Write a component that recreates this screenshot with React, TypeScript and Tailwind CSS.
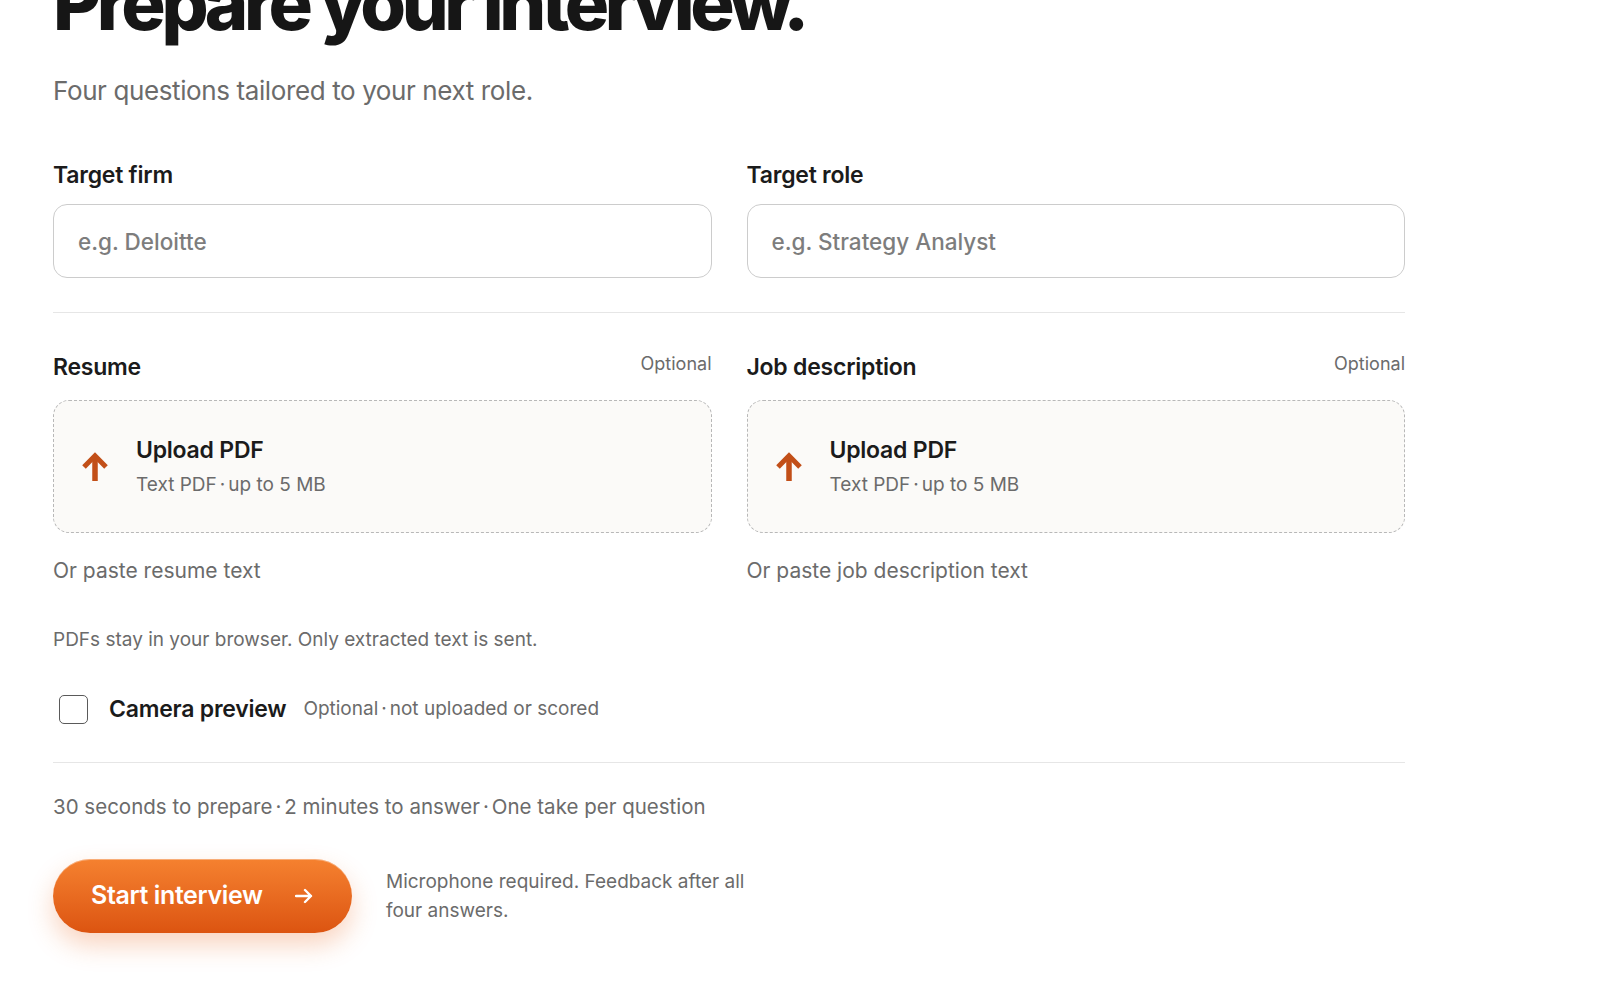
import React from "react";

function UploadArrow() {
  return (
    <svg width="28" height="29" viewBox="0 0 28 29" className="shrink-0">
      <rect x="11.25" y="6" width="5.5" height="23" fill="#c24f18" />
      <polyline points="3,15 14,3.8 25,15" fill="none" stroke="#c24f18" strokeWidth="5" strokeLinejoin="miter" strokeLinecap="butt" />
    </svg>
  );
}

function Dot() {
  return <span className="mx-[3px]">·</span>;
}

function Field({ label, placeholder }: { label: string; placeholder: string }) {
  return (
    <div className="flex flex-col">
      <label className="text-[23px] leading-[28px] font-semibold text-[#1b1b1b] tracking-[-0.01em]">{label}</label>
      <input
        placeholder={placeholder}
        className="mt-[15px] h-[74px] w-full rounded-[14px] border border-[#cccccc] bg-white px-[24px] text-[22.5px] font-medium text-[#1b1b1b] outline-none placeholder:text-[#7d7d7d]"
      />
    </div>
  );
}

function Upload({ label, paste }: { label: string; paste: string }) {
  return (
    <div className="flex flex-col">
      <div className="flex items-start justify-between">
        <span className="text-[23px] leading-[28px] font-semibold text-[#1b1b1b] tracking-[-0.01em]">{label}</span>
        <span className="text-[18px] leading-[22px] text-[#6b6b6b]">Optional</span>
      </div>
      <div className="mt-[19px] h-[133px] rounded-[16px] border border-dashed border-[#b8b8b8] bg-[#fbfaf8] flex items-center pl-[27px]">
        <UploadArrow />
        <div className="ml-[27px] flex flex-col">
          <span className="text-[23px] leading-[30px] font-semibold text-[#1b1b1b] tracking-[-0.01em]">Upload PDF</span>
          <span className="mt-[7px] text-[19px] leading-[26px] text-[#6b6b6b]">
            Text PDF<Dot />up to 5 MB
          </span>
        </div>
      </div>
      <p className="mt-[24px] text-[21px] leading-[28px] text-[#6b6b6b]">{paste}</p>
    </div>
  );
}

export default function App() {
  return (
    <div className="min-h-screen bg-white font-['Inter',sans-serif] overflow-hidden">
      <div className="ml-[53px] w-[1352px]">
        <h1 className="-mt-[34px] text-[74px] leading-none font-extrabold tracking-[-0.06em] text-[#161616]">
          Prepare your interview.
        </h1>
        <p className="mt-[35px] text-[26px] leading-[32px] text-[#6b6b6b] tracking-[-0.015em]">
          Four questions tailored to your next role.
        </p>

        <div className="mt-[54px] grid grid-cols-2 gap-x-[35px]">
          <Field label="Target firm" placeholder="e.g. Deloitte" />
          <Field label="Target role" placeholder="e.g. Strategy Analyst" />
        </div>

        <div className="mt-[34px] border-t border-[#e6e6e6]" />

        <div className="mt-[40px] grid grid-cols-2 gap-x-[35px]">
          <Upload label="Resume" paste="Or paste resume text" />
          <Upload label="Job description" paste="Or paste job description text" />
        </div>

        <p className="mt-[42px] text-[19px] leading-[26px] text-[#6b6b6b]">
          PDFs stay in your browser. Only extracted text is sent.
        </p>

        <label className="mt-[41px] flex items-center h-[30px]">
          <span className="ml-[6px] w-[29px] h-[29px] rounded-[5px] border-[1.5px] border-[#5a5a5a] bg-white shrink-0" />
          <span className="ml-[21px] text-[23px] font-semibold text-[#1b1b1b] tracking-[-0.01em]">Camera preview</span>
          <span className="ml-[17px] text-[19px] text-[#6b6b6b]">
            Optional<Dot />not uploaded or scored
          </span>
        </label>

        <div className="mt-[38px] border-t border-[#e6e6e6]" />

        <p className="mt-[29px] text-[20.5px] leading-[30px] text-[#6b6b6b]">
          30 seconds to prepare<Dot />2 minutes to answer<Dot />One take per question
        </p>

        <div className="mt-[37px] flex items-center">
          <button className="h-[74px] w-[299px] rounded-full bg-gradient-to-b from-[#f5812f] to-[#dc5410] shadow-[0_12px_26px_rgba(234,100,30,0.28),inset_0_1px_0_rgba(255,255,255,0.35)] flex items-center pl-[38px] text-white">
            <span className="text-[25px] font-semibold tracking-[-0.015em]">Start interview</span>
            <svg width="18" height="16" viewBox="0 0 18 16" className="ml-[32px]">
              <path d="M1 8H16M10 2L16 8L10 14" fill="none" stroke="white" strokeWidth="2.4" strokeLinecap="round" strokeLinejoin="round" />
            </svg>
          </button>
          <p className="ml-[34px] w-[370px] text-[19px] leading-[29px] text-[#6b6b6b]">
            Microphone required. Feedback after all four answers.
          </p>
        </div>
      </div>
    </div>
  );
}
